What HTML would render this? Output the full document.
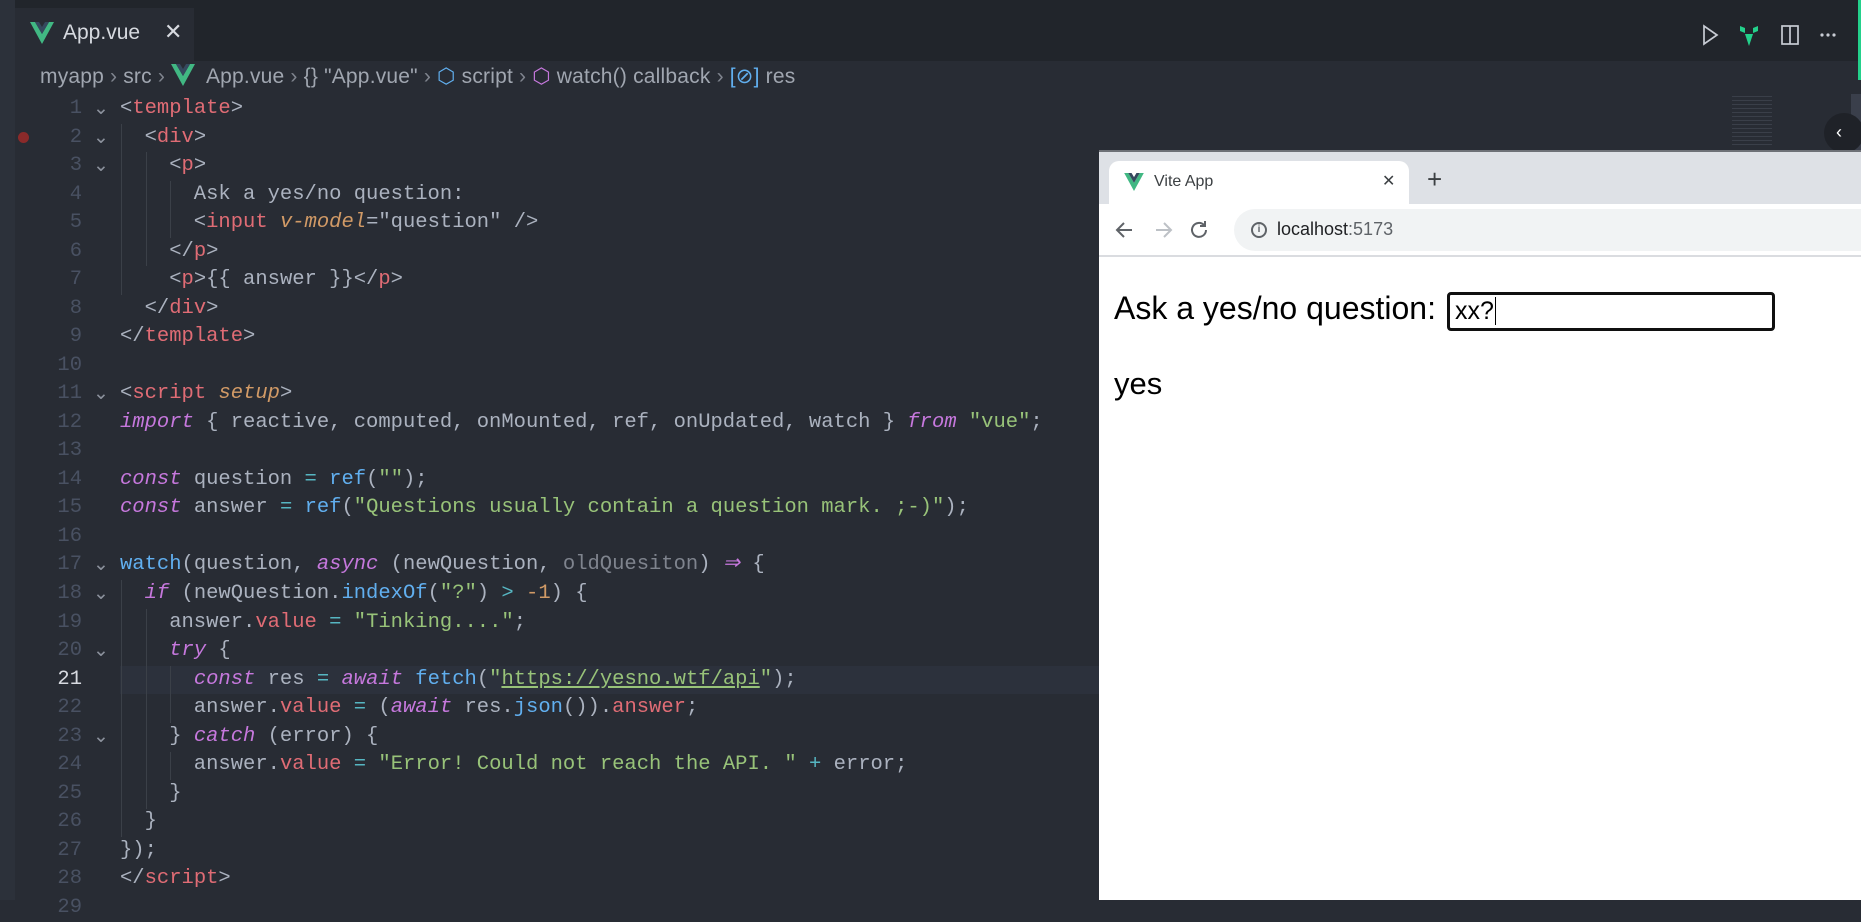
<!DOCTYPE html>
<html><head><meta charset="utf-8"><style>
*{margin:0;padding:0;box-sizing:border-box}
body{width:1861px;height:900px;overflow:hidden;background:#282c34;position:relative;font-family:"Liberation Sans",sans-serif}
.abs{position:absolute}
.code{position:absolute;left:0;top:95px;width:1099px;font-family:"Liberation Mono",monospace;font-size:20.5px;color:#abb2bf}
.ln{position:absolute;left:0;height:28.53px;line-height:28.53px;width:1099px;white-space:pre}
.num{position:absolute;left:40px;width:42px;text-align:right;color:#495162}
.fold{position:absolute;left:93px;color:#8b919c;font-size:19px}
.t{position:absolute;left:120px}
.r{color:#e06c75}.p{color:#c678dd;font-style:italic}.g{color:#98c379}.b{color:#61afef}.o{color:#d19a66}.oi{color:#d19a66;font-style:italic}.c{color:#56b6c2}.d{color:#7f848e}
.guide{position:absolute;width:1px;background:#3b4048}
.bc{position:absolute;top:64px;font-size:21px;color:#a0a6b0;white-space:nowrap;letter-spacing:0.2px}
.bc .s{color:#7f848e;margin:0 6px}
</style></head><body>
<div class="abs" style="left:0;top:0;width:1861px;height:61px;background:#21252b"></div>
<div class="abs" style="left:0;top:0;width:15px;height:900px;background:#2c313a"></div>
<div class="abs" style="left:15px;top:8px;width:179px;height:53px;background:#282c34"></div>
<svg class="abs" style="left:30px;top:22px" width="24" height="22" viewBox="0 0 24 22"><path d="M0 0h5l7 12 7-12h5L12 22z" fill="#41b883"/><path d="M5 0h4l3 5 3-5h4l-7 12z" fill="#35495e"/></svg>
<div class="abs" style="left:63px;top:21px;font-size:21px;color:#d7dae0">App.vue</div>
<div class="abs" style="left:164px;top:19px;font-size:22px;color:#d7dae0">✕</div>
<div class="bc" style="left:40px">myapp<span class="s">›</span>src<span class="s">›</span><svg width="24" height="22" viewBox="0 0 24 22" style="vertical-align:-3px"><path d="M0 0h5l7 12 7-12h5L12 22z" fill="#41b883"/><path d="M5 0h4l3 5 3-5h4l-7 12z" fill="#35495e"/></svg>&nbsp; App.vue<span class="s">›</span>{} "App.vue"<span class="s">›</span><span style="color:#61afef">⬡</span> script<span class="s">›</span><span style="color:#c678dd">⬡</span> watch() callback<span class="s">›</span><span style="color:#61afef">[⊘]</span> res</div>
<!-- top right icons -->
<svg class="abs" style="left:1700px;top:24px" width="150" height="22" viewBox="0 0 150 22"><path d="M4 2v18l13-9z" fill="none" stroke="#c8ccd4" stroke-width="1.7"/><path d="M40 2l5 2v5l-5-2zM58 2l-5 2v5l5-2zM45 10l4 12 4-12z" fill="#23d18b"/><rect x="82" y="2" width="16" height="18" fill="none" stroke="#c8ccd4" stroke-width="1.7"/><path d="M90 2v18" stroke="#c8ccd4" stroke-width="1.7"/><circle cx="122" cy="11" r="1.6" fill="#c8ccd4"/><circle cx="128" cy="11" r="1.6" fill="#c8ccd4"/><circle cx="134" cy="11" r="1.6" fill="#c8ccd4"/></svg>
<div class="abs" style="left:1858px;top:0;width:3px;height:80px;background:#23d18b"></div>
<!-- minimap -->
<div class="abs" style="left:1851px;top:94px;width:10px;height:56px;background:#3a3f4b"></div>
<div class="abs" style="left:1732px;top:96px;width:40px;height:52px;opacity:.35;background:repeating-linear-gradient(#5c6370 0 1px,transparent 1px 4px)"></div>
<div class="abs" style="left:1824px;top:113px;width:40px;height:40px;border-radius:20px;background:#1f2228;color:#fff;font-size:18px;line-height:38px;padding-left:12px">‹</div>
<div class="abs" style="left:18px;top:132px;width:11px;height:11px;border-radius:6px;background:#8b2a2a"></div>
<!-- current line -->
<div class="abs" style="left:120px;top:665.7px;width:979px;height:28.5px;background:#2c313c"></div>
<!-- guides -->
<div class="guide" style="left:121px;top:123.5px;height:171px"></div>
<div class="guide" style="left:146px;top:152px;height:114px"></div>
<div class="guide" style="left:170px;top:180.6px;height:57px"></div>
<div class="guide" style="left:121px;top:580px;height:257px"></div>
<div class="guide" style="left:146px;top:609px;height:200px"></div>
<div class="guide" style="left:170px;top:666px;height:57px"></div>
<div class="guide" style="left:170px;top:751.5px;height:28.5px"></div>
<div class="code">
<div class="ln" style="top:0"><span class="num">1</span><span class="fold">⌄</span><span class="t">&lt;<span class="r">template</span>&gt;</span></div>
<div class="ln" style="top:28.53px"><span class="num">2</span><span class="fold">⌄</span><span class="t">  &lt;<span class="r">div</span>&gt;</span></div>
<div class="ln" style="top:57.06px"><span class="num">3</span><span class="fold">⌄</span><span class="t">    &lt;<span class="r">p</span>&gt;</span></div>
<div class="ln" style="top:85.59px"><span class="num">4</span><span class="t">      Ask a yes/no question:</span></div>
<div class="ln" style="top:114.12px"><span class="num">5</span><span class="t">      &lt;<span class="r">input</span> <span class="oi">v-model</span>="question" /&gt;</span></div>
<div class="ln" style="top:142.65px"><span class="num">6</span><span class="t">    &lt;/<span class="r">p</span>&gt;</span></div>
<div class="ln" style="top:171.18px"><span class="num">7</span><span class="t">    &lt;<span class="r">p</span>&gt;{{ answer }}&lt;/<span class="r">p</span>&gt;</span></div>
<div class="ln" style="top:199.71px"><span class="num">8</span><span class="t">  &lt;/<span class="r">div</span>&gt;</span></div>
<div class="ln" style="top:228.24px"><span class="num">9</span><span class="t">&lt;/<span class="r">template</span>&gt;</span></div>
<div class="ln" style="top:256.77px"><span class="num">10</span></div>
<div class="ln" style="top:285.3px"><span class="num">11</span><span class="fold">⌄</span><span class="t">&lt;<span class="r">script</span> <span class="oi">setup</span>&gt;</span></div>
<div class="ln" style="top:313.83px"><span class="num">12</span><span class="t"><span class="p">import</span> { reactive, computed, onMounted, ref, onUpdated, watch } <span class="p">from</span> <span class="g">"vue"</span>;</span></div>
<div class="ln" style="top:342.36px"><span class="num">13</span></div>
<div class="ln" style="top:370.89px"><span class="num">14</span><span class="t"><span class="p">const</span> question <span class="c">=</span> <span class="b">ref</span>(<span class="g">""</span>);</span></div>
<div class="ln" style="top:399.42px"><span class="num">15</span><span class="t"><span class="p">const</span> answer <span class="c">=</span> <span class="b">ref</span>(<span class="g">"Questions usually contain a question mark. ;-)"</span>);</span></div>
<div class="ln" style="top:427.95px"><span class="num">16</span></div>
<div class="ln" style="top:456.48px"><span class="num">17</span><span class="fold">⌄</span><span class="t"><span class="b">watch</span>(question, <span class="p">async</span> (newQuestion, <span class="d">oldQuesiton</span>) <span class="p">⇒</span> {</span></div>
<div class="ln" style="top:485.01px"><span class="num">18</span><span class="fold">⌄</span><span class="t">  <span class="p">if</span> (newQuestion.<span class="b">indexOf</span>(<span class="g">"?"</span>) <span class="c">&gt;</span> <span class="o">-1</span>) {</span></div>
<div class="ln" style="top:513.54px"><span class="num">19</span><span class="t">    answer.<span class="r">value</span> <span class="c">=</span> <span class="g">"Tinking...."</span>;</span></div>
<div class="ln" style="top:542.07px"><span class="num">20</span><span class="fold">⌄</span><span class="t">    <span class="p">try</span> {</span></div>
<div class="ln" style="top:570.6px"><span class="num" style="color:#d7dae0">21</span><span class="t">      <span class="p">const</span> res <span class="c">=</span> <span class="p">await</span> <span class="b">fetch</span>(<span class="g">"<u>https://yesno.wtf/api</u>"</span>);</span></div>
<div class="ln" style="top:599.13px"><span class="num">22</span><span class="t">      answer.<span class="r">value</span> <span class="c">=</span> (<span class="p">await</span> res.<span class="b">json</span>()).<span class="r">answer</span>;</span></div>
<div class="ln" style="top:627.66px"><span class="num">23</span><span class="fold">⌄</span><span class="t">    } <span class="p">catch</span> (error) {</span></div>
<div class="ln" style="top:656.19px"><span class="num">24</span><span class="t">      answer.<span class="r">value</span> <span class="c">=</span> <span class="g">"Error! Could not reach the API. "</span> <span class="c">+</span> error;</span></div>
<div class="ln" style="top:684.72px"><span class="num">25</span><span class="t">    }</span></div>
<div class="ln" style="top:713.25px"><span class="num">26</span><span class="t">  }</span></div>
<div class="ln" style="top:741.78px"><span class="num">27</span><span class="t">});</span></div>
<div class="ln" style="top:770.31px"><span class="num">28</span><span class="t">&lt;/<span class="r">script</span>&gt;</span></div>
<div class="ln" style="top:798.84px"><span class="num">29</span></div>
</div>
<!-- browser -->
<div class="abs" style="left:1099px;top:150px;width:762px;height:750px;background:#fff;border-top:2px solid #6e7177"></div>
<div class="abs" style="left:1099px;top:152px;width:762px;height:52px;background:#dee1e6"></div>
<div class="abs" style="left:1109px;top:161px;width:300px;height:45px;background:#fff;border-radius:10px 10px 0 0"></div>
<svg class="abs" style="left:1124px;top:173px" width="20" height="18" viewBox="0 0 24 22"><path d="M0 0h5l7 12 7-12h5L12 22z" fill="#41b883"/><path d="M5 0h4l3 5 3-5h4l-7 12z" fill="#35495e"/></svg>
<div class="abs" style="left:1154px;top:173px;font-size:16px;color:#3c4043">Vite App</div>
<div class="abs" style="left:1382px;top:171px;font-size:16px;color:#3c4043">✕</div>
<div class="abs" style="left:1427px;top:164px;font-size:26px;color:#3c4043;font-weight:300">+</div>
<svg class="abs" style="left:1114px;top:218px" width="100" height="24" viewBox="0 0 100 24"><path d="M18 12H4M10 5l-7 7 7 7" fill="none" stroke="#5f6368" stroke-width="2"/><path d="M42 12h14M50 5l7 7-7 7" fill="none" stroke="#bdc1c6" stroke-width="2"/><path d="M92 12a7 7 0 1 1-2-5" fill="none" stroke="#5f6368" stroke-width="2"/><path d="M91 3v5h-5" fill="none" stroke="#5f6368" stroke-width="2"/></svg>
<div class="abs" style="left:1234px;top:209px;width:627px;height:42px;background:#f1f3f4;border-radius:21px 0 0 21px"></div>
<div class="abs" style="left:1251px;top:222px;width:16px;height:16px;border:2px solid #5f6368;border-radius:50%;font-size:10px;line-height:12px;text-align:center;color:#5f6368;font-weight:bold">i</div>
<div class="abs" style="left:1277px;top:219px;font-size:18px;color:#202124">localhost<span style="color:#5f6368">:5173</span></div>
<div class="abs" style="left:1099px;top:255px;width:762px;height:2px;background:#dadce0"></div>
<div class="abs" style="left:1114px;top:290px;font-size:32px;color:#000;white-space:nowrap">Ask a yes/no question:</div>
<div class="abs" style="left:1447px;top:292px;width:328px;height:39px;border:3px solid #101010;border-radius:4px"></div>
<div class="abs" style="left:1455px;top:297px;font-size:25px;color:#000">xx?<span style="border-left:1px solid #000;margin-left:1px"></span></div>
<div class="abs" style="left:1114px;top:366px;font-size:31px;color:#000">yes</div>
</body></html>
